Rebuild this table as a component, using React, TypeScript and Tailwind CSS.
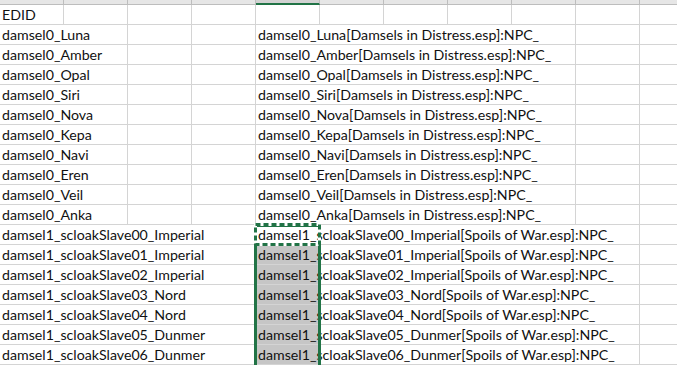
import React from "react";

type Row = { a: string; aSpan: number; e: string; eSpan: number };

const names0 = ["Luna", "Amber", "Opal", "Siri", "Nova", "Kepa", "Navi", "Eren", "Veil", "Anka"];
const names1 = [
  "scloakSlave00_Imperial",
  "scloakSlave01_Imperial",
  "scloakSlave02_Imperial",
  "scloakSlave03_Nord",
  "scloakSlave04_Nord",
  "scloakSlave05_Dunmer",
  "scloakSlave06_Dunmer",
];

const rows: Row[] = [
  { a: "EDID", aSpan: 1, e: "", eSpan: 1 },
  ...names0.map((n) => ({
    a: `damsel0_${n}`,
    aSpan: 2,
    e: `damsel0_${n}[Damsels in Distress.esp]:NPC_`,
    eSpan: 5,
  })),
  ...names1.map((n) => ({
    a: `damsel1_${n}`,
    aSpan: 4,
    e: `damsel1_${n}[Spoils of War.esp]:NPC_`,
    eSpan: 6,
  })),
];

const COLS = 11;
const SEL_START = 11;

function Cell({ span, text }: { span: number; text?: string }) {
  return (
    <div
      className="relative shrink-0 h-full border-r border-[#d4d4d4]"
      style={{ width: span * 64 }}
    >
      {text ? (
        <span className="absolute left-[2px] top-0 whitespace-nowrap leading-[19px] text-[14.2px] text-[#111]">
          {text}
        </span>
      ) : null}
    </div>
  );
}

export default function App() {
  return (
    <div
      className="relative w-[677px] h-[365px] overflow-hidden bg-white"
      style={{ fontFamily: "Lato, 'Open Sans', sans-serif" }}
    >
      {/* column header strip (bottom edge visible) */}
      <div className="flex h-[5px]">
        {Array.from({ length: COLS }).map((_, i) =>
          i === 4 ? (
            <div key={i} className="shrink-0 w-[64px] h-full bg-[#d2d2d2] border-r border-[#bdbdbd] border-b-2 border-b-[#217346]" />
          ) : (
            <div key={i} className="shrink-0 w-[64px] h-full bg-[#e6e6e6] border-r border-[#bdbdbd] border-b border-b-[#bdbdbd]" />
          )
        )}
      </div>

      {/* rows */}
      {rows.map((r, idx) => {
        const cells: React.ReactNode[] = [];
        cells.push(<Cell key="a" span={r.aSpan} text={r.a} />);
        for (let c = r.aSpan; c < 4; c++) cells.push(<Cell key={`b${c}`} span={1} />);
        const sel = idx > SEL_START;
        if (r.e) {
          cells.push(
            <div key="e" className="relative shrink-0 h-full flex" style={{ width: r.eSpan * 64 }}>
              <div className={`shrink-0 w-[64px] h-full ${sel ? "bg-[#c6c6c6]" : ""}`} />
              <div className="flex-1 h-full border-r border-[#d4d4d4]" />
              <span className="absolute left-[2px] top-0 whitespace-nowrap leading-[19px] text-[14.2px] text-[#111]">
                {r.e}
              </span>
            </div>
          );
        } else {
          cells.push(<Cell key="e" span={1} />);
        }
        const used = 4 + (r.e ? r.eSpan : 1);
        for (let c = used; c < COLS; c++) cells.push(<Cell key={`r${c}`} span={1} />);
        return (
          <div key={idx} className="flex h-[20px] border-b border-[#d4d4d4]">
            {cells}
          </div>
        );
      })}

      {/* selection range border */}
      <div className="absolute left-[254px] top-[224px] w-[67px] h-[200px] border-[3px] border-[#217346] pointer-events-none" />

      {/* copy marquee */}
      <svg className="absolute left-[254px] top-[223px] pointer-events-none" width="67" height="23" viewBox="0 0 67 23">
        <rect x="1.5" y="1.5" width="64" height="20" fill="none" stroke="#ffffff" strokeWidth="3" />
        <rect x="1.5" y="1.5" width="64" height="20" fill="none" stroke="#217346" strokeWidth="3" strokeDasharray="5 3" />
      </svg>
    </div>
  );
}
